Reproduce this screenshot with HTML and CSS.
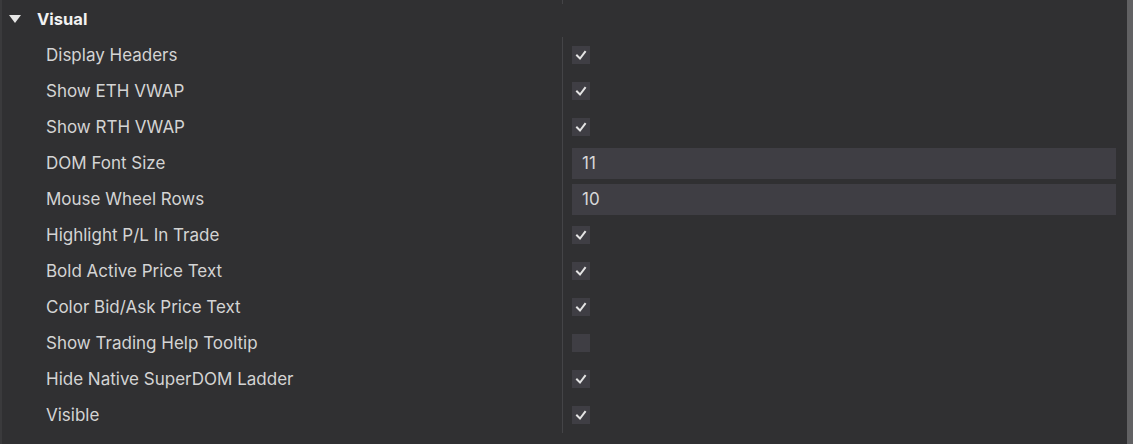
FILE: index.html
```html
<!DOCTYPE html>
<html>
<head>
<meta charset="utf-8">
<link rel="stylesheet" href="styles.css">
</head>
<body>
<div class="page">
  <div class="panel">
    <div class="group-header">
      <span class="caret"></span>
      <span class="group-title">Visual</span>
      <span class="header-split"></span>
    </div>
    <div class="rows">
      <div class="row"><div class="label">Display Headers</div><div class="value"><span class="check on"><svg viewBox="0 0 18 18"><path d="M5 9.5 L8 12.5 L13 6"/></svg></span></div></div>
      <div class="row"><div class="label">Show ETH VWAP</div><div class="value"><span class="check on"><svg viewBox="0 0 18 18"><path d="M5 9.5 L8 12.5 L13 6"/></svg></span></div></div>
      <div class="row"><div class="label">Show RTH VWAP</div><div class="value"><span class="check on"><svg viewBox="0 0 18 18"><path d="M5 9.5 L8 12.5 L13 6"/></svg></span></div></div>
      <div class="row"><div class="label">DOM Font Size</div><div class="value"><div class="input">11</div></div></div>
      <div class="row"><div class="label">Mouse Wheel Rows</div><div class="value"><div class="input">10</div></div></div>
      <div class="row"><div class="label">Highlight P/L In Trade</div><div class="value"><span class="check on"><svg viewBox="0 0 18 18"><path d="M5 9.5 L8 12.5 L13 6"/></svg></span></div></div>
      <div class="row"><div class="label">Bold Active Price Text</div><div class="value"><span class="check on"><svg viewBox="0 0 18 18"><path d="M5 9.5 L8 12.5 L13 6"/></svg></span></div></div>
      <div class="row"><div class="label">Color Bid/Ask Price Text</div><div class="value"><span class="check on"><svg viewBox="0 0 18 18"><path d="M5 9.5 L8 12.5 L13 6"/></svg></span></div></div>
      <div class="row"><div class="label">Show Trading Help Tooltip</div><div class="value"><span class="check"></span></div></div>
      <div class="row"><div class="label">Hide Native SuperDOM Ladder</div><div class="value"><span class="check on"><svg viewBox="0 0 18 18"><path d="M5 9.5 L8 12.5 L13 6"/></svg></span></div></div>
      <div class="row"><div class="label">Visible</div><div class="value"><span class="check on"><svg viewBox="0 0 18 18"><path d="M5 9.5 L8 12.5 L13 6"/></svg></span></div></div>
    </div>
  </div>
  <div class="scrollbar"></div>
</div>
</body>
</html>
```
FILE: styles.css
```css
html, body {
  margin: 0;
  padding: 0;
  background: #303032;
}
body {
  font-family: "Inter", "Roboto", sans-serif;
  color: #d6d6d6;
  width: 1133px;
  height: 444px;
  overflow: hidden;
}
.page {
  display: flex;
  height: 444px;
}
.panel {
  flex: 1;
  border-left: 2px solid #3a3a3c;
  background: #303032;
}
.scrollbar {
  width: 6px;
  background: #616163;
}
.group-header {
  position: relative;
  height: 37px;
  display: flex;
  align-items: center;
  padding-left: 7px;
  padding-top: 1px;
  box-sizing: border-box;
}
.caret {
  width: 0;
  height: 0;
  border-left: 6.5px solid transparent;
  border-right: 6.5px solid transparent;
  border-top: 8px solid #e6e6e6;
  margin-right: 16px;
  margin-bottom: 1px;
}
.group-title {
  font-weight: 700;
  font-size: 16.5px;
  color: #f2f2f2;
}
.header-split {
  position: absolute;
  left: 560px;
  top: 0;
  width: 1px;
  height: 4px;
  background: #444447;
}
.rows {
  display: flex;
  flex-direction: column;
}
.row {
  display: flex;
  height: 36px;
}
.label {
  width: 516px;
  padding-left: 44px;
  display: flex;
  align-items: center;
  font-size: 17px;
  color: #d4d4d4;
  border-right: 1px solid #444447;
}
.value {
  flex: 1;
  display: flex;
  align-items: center;
  padding-left: 9px;
  padding-right: 11px;
}
.check {
  width: 18px;
  height: 18px;
  background: #3f3e44;
  display: block;
}
.check svg {
  width: 18px;
  height: 18px;
  display: block;
}
.check path {
  fill: none;
  stroke: #e4e4e4;
  stroke-width: 2;
  stroke-linecap: square;
}
.input {
  flex: 1;
  height: 31px;
  background: #3f3e44;
  display: flex;
  align-items: center;
  padding-left: 10px;
  font-size: 17px;
  color: #d8d8d8;
}
```
